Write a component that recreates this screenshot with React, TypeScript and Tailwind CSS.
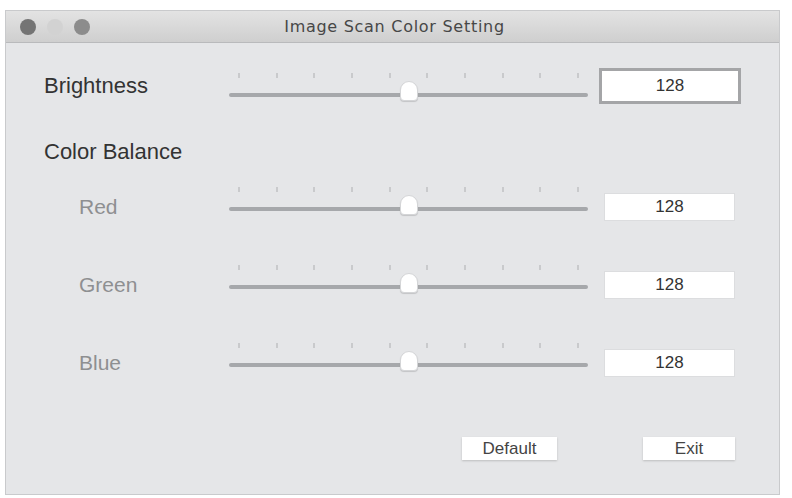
import React from "react";

/* ──────────────────────────────────────────
   Image Scan Color Setting dialog
   ────────────────────────────────────────── */

const TICKS = Array.from({ length: 10 }, (_, i) => i);

function Slider({ value, className }: { value: number; className: string }) {
  const pct = (value / 255) * 100;
  return (
    <div className={`flex w-[359px] shrink-0 flex-col ${className}`}>
      {/* Tick marks */}
      <div className="flex h-[5px] justify-between px-[9px]">
        {TICKS.map((t) => (
          <div key={t} className="h-[5px] w-[2px] bg-[#c9cacc]" />
        ))}
      </div>
      {/* Track + knob */}
      <div className="relative mt-[15px] h-[4px] rounded-full bg-[#a6a8ab]">
        <div
          className="absolute -top-[12px] h-[20px] w-[18px] rounded-t-[9px] rounded-b-[4px] border border-[#d4d5d7] bg-white shadow-[0_1px_1px_rgba(0,0,0,0.15)]"
          style={{ left: `calc(${pct}% - 9px)` }}
        />
      </div>
    </div>
  );
}

function ValueField({ value, focused }: { value: number; focused?: boolean }) {
  return focused ? (
    <div className="ml-[11px] flex h-[36px] w-[142px] items-center justify-center border-[3px] border-[#a4a5a7] bg-white text-[17px] text-[#333]">
      {value}
    </div>
  ) : (
    <div className="ml-[16px] flex h-[28px] w-[131px] items-center justify-center border border-[#dcdddf] bg-white text-[17px] text-[#333]">
      {value}
    </div>
  );
}

function ChannelRow({ label, value }: { label: string; value: number }) {
  return (
    <div className="flex h-[28px] items-center">
      <div className="w-[223px] shrink-0 pl-[73px] text-[21px] leading-[28px] text-[#8e8f91]">
        {label}
      </div>
      <Slider value={value} className="mb-[17px]" />
      <ValueField value={value} />
    </div>
  );
}

function DialogButton({ label, width }: { label: string; width: string }) {
  return (
    <button
      className={`flex h-[23px] ${width} items-center justify-center bg-white text-[17px] leading-none text-[#444] shadow-[0_1px_2px_rgba(0,0,0,0.18)]`}
    >
      {label}
    </button>
  );
}

export default function App() {
  return (
    <div
      className="h-[498px] w-[792px] bg-white pl-[5px] pt-[10px]"
      style={{ fontFamily: '"Liberation Sans", Arial, sans-serif' }}
    >
      <div className="flex h-[485px] w-[775px] flex-col overflow-hidden border border-[#c9cacc] bg-[#e5e6e8]">
        {/* Title bar */}
        <div className="relative flex h-[32px] shrink-0 items-center justify-center border-b border-[#b9babc] bg-gradient-to-b from-[#e3e3e3] to-[#cfcfcf]">
          <div className="absolute left-[14px] top-[8px] flex gap-[11px]">
            <div className="h-[16px] w-[16px] rounded-full bg-[#747474]" />
            <div className="h-[16px] w-[16px] rounded-full bg-[#d2d2d2]" />
            <div className="h-[16px] w-[16px] rounded-full bg-[#8c8c8c]" />
          </div>
          <span
            className="ml-[4px] text-[16px] tracking-[0.045em] text-[#474747]"
            style={{ fontFamily: '"DejaVu Sans", Verdana, sans-serif' }}
          >
            Image Scan Color Setting
          </span>
        </div>

        {/* Content */}
        <div className="flex flex-col">
          <div className="mt-[25px] flex h-[36px] items-center">
            <div className="w-[223px] shrink-0 pl-[38px] text-[22px] leading-[28px] text-[#333]">
              Brightness
            </div>
            <Slider value={128} className="mb-[3px]" />
            <ValueField value={128} focused />
          </div>

          <div className="mt-[34px] pl-[38px] text-[22px] leading-[28px] text-[#333]">
            Color Balance
          </div>

          <div className="mt-[27px] flex flex-col gap-[50px]">
            <ChannelRow label="Red" value={128} />
            <ChannelRow label="Green" value={128} />
            <ChannelRow label="Blue" value={128} />
          </div>

          <div className="mt-[60px] flex justify-end gap-[86px] pr-[44px]">
            <DialogButton label="Default" width="w-[95px]" />
            <DialogButton label="Exit" width="w-[92px]" />
          </div>
        </div>
      </div>
    </div>
  );
}
